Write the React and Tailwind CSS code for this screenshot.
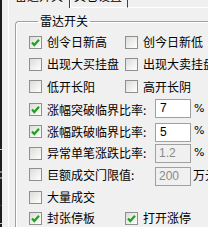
import React from "react";

const CJK = { fontFamily: '"Noto Sans CJK SC", "Noto Sans", sans-serif' };
const NUM = { fontFamily: '"Liberation Sans", sans-serif' };

function Box({ checked }) {
  return (
    <div className="w-[13px] h-[13px] shrink-0 border border-[#8f8f8f] bg-gradient-to-br from-[#dcdcd7] to-white flex items-center justify-center">
      {checked && (
        <svg width="9" height="9" viewBox="0 0 9 9">
          <path d="M1 4.5 L3.3 7 L8 1.8" fill="none" stroke="#21a121" strokeWidth="2.2" />
        </svg>
      )}
    </div>
  );
}

function Check({ checked, label }) {
  return (
    <div className="flex items-center gap-[5px] w-[96px] shrink-0">
      <Box checked={checked} />
      <span className="whitespace-nowrap text-[12px] leading-[14px] text-black">{label}</span>
    </div>
  );
}

function Field({ checked, label, value, disabled, mt, unit }) {
  return (
    <>
      <div className="flex items-center gap-[5px] w-[126px] shrink-0">
        <Box checked={checked} />
        <span className="whitespace-nowrap text-[12px] leading-[14px]">{label}</span>
      </div>
      <div
        className={
          disabled
            ? "w-[36px] h-[19px] shrink-0 border border-[#a0a0a0] bg-[#f0f0f0] text-[#8a8a8a] pl-[3px] text-[12px] leading-[17px] self-start"
            : "w-[36px] h-[19px] shrink-0 border border-[#a0a0a0] bg-white text-black pl-[4px] text-[12px] leading-[17px] self-start"
        }
        style={{ ...NUM, marginTop: mt }}
      >
        {value}
      </div>
      {unit === "%" ? (
        <span className="ml-[3px] text-[11px]" style={{ fontFamily: '"DejaVu Sans", sans-serif' }}>%</span>
      ) : (
        <span className="ml-[2px] text-[12px] leading-[14px] whitespace-nowrap">{unit}</span>
      )}
    </>
  );
}

export default function App() {
  return (
    <div className="w-[208px] h-[227px] overflow-hidden bg-[#f0f0f0] flex" style={CJK}>
      <div className="w-[2px] h-full bg-[#1e1e1e] flex flex-col shrink-0">
        <div className="h-[149px]" />
        <div className="h-[1px] bg-[#d8d800]" />
        <div className="h-[21px]" />
        <div className="h-[2px] bg-[#7a7a7a]" />
        <div className="h-[4px]" />
        <div className="h-[2px] bg-[#7a7a7a]" />
        <div className="h-[26px]" />
        <div className="h-[1px] bg-[#d00000]" />
        <div className="h-[17px]" />
        <div className="h-[1px] bg-[#d8d800]" />
      </div>
      <div className="flex-1 flex flex-col pl-[6px]">
        <div className="h-[8px] flex shrink-0 overflow-hidden">
          <div className="w-[62px] border-l border-white border-r border-r-[#404040] flex justify-center">
            <span className="text-[12px] leading-[14px] mt-[-11px] whitespace-nowrap">雷达开关</span>
          </div>
          <div className="w-[58px] border-l border-white border-r border-r-[#404040] border-b border-b-white pl-[3px]">
            <span className="text-[12px] leading-[14px] mt-[-11px] block whitespace-nowrap">其它设置</span>
          </div>
          <div className="flex-1 border-b border-white" />
        </div>
        <div className="flex-1 border-l border-white pl-[6px] pt-[6px]">
          <fieldset className="w-[230px] h-[260px] border-l border-t border-[#a0a0a0] rounded-tl-[4px] pl-[13px] shadow-[inset_1px_1px_0_#fff]">
            <legend className="ml-[9px] px-[2px] text-[12px] leading-[14px] text-black">雷达开关</legend>
            <div className="flex flex-col pt-[3px]">
              <div className="h-[22px] flex items-center">
                <Check checked label="创令日新高" />
                <Check label="创今日新低" />
              </div>
              <div className="h-[22px] flex items-center">
                <Check label="出现大买挂盘" />
                <Check label="出现大卖挂盘" />
              </div>
              <div className="h-[23px] flex items-center">
                <Check label="低开长阳" />
                <Check label="高开长阴" />
              </div>
              <div className="h-[23px] flex items-center">
                <Field checked label="涨幅突破临界比率:" value="7" mt="1px" unit="%" />
              </div>
              <div className="h-[21px] flex items-center">
                <Field checked label="涨幅跌破临界比率:" value="5" mt="2px" unit="%" />
              </div>
              <div className="h-[22px] flex items-center">
                <Field label="异常单笔涨跌比率:" value="1.2" disabled mt="2px" unit="%" />
              </div>
              <div className="h-[21px] flex items-center">
                <Field label="巨额成交门限值:" value="200" disabled mt="3px" unit="万元" />
              </div>
              <div className="h-[24px] flex items-center">
                <Check label="大量成交" />
              </div>
              <div className="h-[18px] flex items-center">
                <Check checked label="封张停板" />
                <Check checked label="打开涨停" />
              </div>
            </div>
          </fieldset>
        </div>
      </div>
    </div>
  );
}
